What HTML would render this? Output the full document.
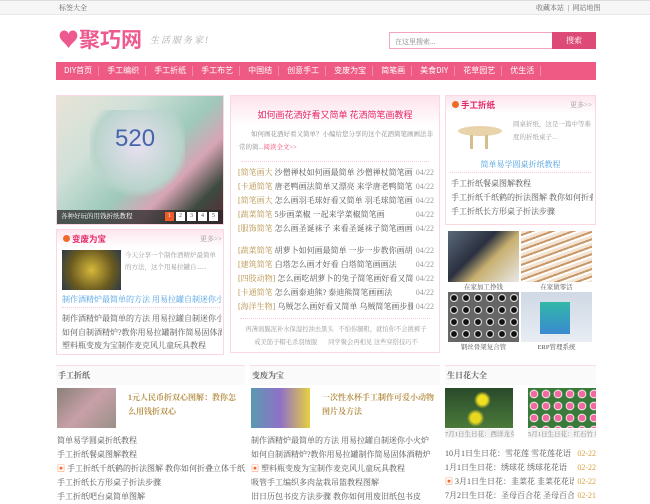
<!DOCTYPE html>
<html><head><meta charset="utf-8"><style>
*{margin:0;padding:0;box-sizing:border-box}
body{width:650px;height:500px;overflow:hidden;background:#fff;font-family:"Liberation Serif","Noto Serif CJK SC",serif;font-size:8px;color:#555;position:relative}
.a{position:absolute}
.top{left:0;top:0;width:650px;height:15px;background:#f6f6f6;border-bottom:1px solid #e8e8e8;border-top:1px solid #ddd}
.nav{left:56px;top:62px;width:540px;height:18px;background:#ee5a83;color:#fff;font-size:8px;font-family:"Noto Sans CJK SC",sans-serif;line-height:18px;white-space:nowrap}
.nav span{display:inline-block;padding:0 6px 0 8px;border-right:1px solid #f48ba8;line-height:10px}
.box{border:1px solid #fcd6e1;background:#fff}
.hd{background:linear-gradient(#fde6ee,#fff);height:18px}
.ttl{color:#e6296a;font-weight:bold;font-size:8.5px;font-family:"Noto Sans CJK SC",sans-serif}
.more{color:#999;font-size:7px}
.dot{width:7px;height:7px;border-radius:50%;background:#f06a2a;display:inline-block}
.l{white-space:nowrap;overflow:hidden;font-size:8px;color:#555}
.r{display:flex;white-space:nowrap;font-size:8px;color:#555;height:14px}
.r .t{flex:1;overflow:hidden}
.r .d{flex:none;margin-left:3px;color:#999}
.sec{border-top:1px solid #fbdbe5;background:#fafafa;height:20px;line-height:20px;padding-left:2px;font-weight:bold;color:#666;font-size:8px}
</style></head><body>
<div class="a top"></div>
<div class="a" style="left:59px;top:3px;font-size:7px;color:#666">标签大全</div>
<div class="a" style="left:536px;top:3px;font-size:7px;color:#666">收藏本站 &nbsp;|&nbsp; 网站地图</div>
<div class="a" style="left:58px;top:26px;color:#ee5a8f;font-size:21px;font-weight:bold;font-family:'Noto Sans CJK SC',sans-serif;line-height:26px">♥聚巧网</div>
<div class="a" style="left:150px;top:33px;color:#aaa;font-size:9px;letter-spacing:2px;font-style:italic">生活服务家!</div>
<div class="a" style="left:389px;top:32px;width:164px;height:17px;border:1px solid #f4a5be;font-size:7px;color:#888;padding:4px 5px">在这里搜索...</div>
<div class="a" style="left:552px;top:32px;width:44px;height:17px;background:#dd4a77;color:#fff;font-size:8px;text-align:center;line-height:17px">搜索</div>
<div class="a nav"><span>DIY首页</span><span>手工编织</span><span>手工折纸</span><span>手工布艺</span><span>中国结</span><span>创意手工</span><span>变废为宝</span><span>简笔画</span><span>美食DIY</span><span>花草园艺</span><span>优生活</span></div>

<div class="a" style="left:56px;top:95px;width:168px;height:130px;border:1px solid #fcd6e1;background:linear-gradient(135deg,#e9e4d8 0%,#cfe0d8 30%,#9ec9bb 55%,#d7a4b5 70%,#3d4a3f 85%,#5a2a38 100%)"></div>
<div class="a" style="left:90px;top:110px;width:95px;height:90px;background:radial-gradient(circle at 50% 40%,#e8e0f0,#b9d4cc 60%,transparent 72%)"></div>
<div class="a" style="left:115px;top:125px;font-size:24px;color:#4466aa;font-family:'Liberation Sans',sans-serif">520</div>
<div class="a" style="left:57px;top:210px;width:166px;height:14px;background:rgba(40,40,40,.75);color:#fff;font-size:6.5px;line-height:14px;padding-left:4px">各种好玩的用钱折纸教程</div>
<div class="a" style="left:165px;top:212px;font-size:6px;line-height:9px;white-space:nowrap"><span style="display:inline-block;width:9px;background:#f05a28;color:#fff;text-align:center;margin-right:2px">1</span><span style="display:inline-block;width:9px;background:#fff;text-align:center;margin-right:2px">2</span><span style="display:inline-block;width:9px;background:#fff;text-align:center;margin-right:2px">3</span><span style="display:inline-block;width:9px;background:#fff;text-align:center;margin-right:2px">4</span><span style="display:inline-block;width:9px;background:#fff;text-align:center">5</span></div>

<div class="a box" style="left:56px;top:229px;width:168px;height:126px"><div class="hd"></div></div>
<div class="a" style="left:63px;top:233px"><span class="dot"></span> <span class="ttl">变废为宝</span></div>
<div class="a more" style="left:200px;top:234px">更多>></div>
<div class="a" style="left:62px;top:250px;width:59px;height:40px;background:radial-gradient(circle at 50% 50%,#d6b83a,#6a5a20 60%,#2a3a4a)"></div>
<div class="a" style="left:125px;top:250px;width:95px;font-size:6.5px;color:#999;line-height:12px">今天分享一个制作酒精炉最简单的方法，这个用易拉罐自......</div>
<div class="a l" style="left:62px;top:294px;width:160px;color:#4a9ee0">制作酒精炉最简单的方法 用易拉罐自制迷你小火炉</div>
<div class="a" style="left:62px;top:307px;width:158px;border-top:1px dotted #fbc8d8"></div>
<div class="a" style="left:62px;top:312px;width:160px;line-height:13.5px">
<div class="l">制作酒精炉最简单的方法 用易拉罐自制迷你小火炉</div>
<div class="l">如何自制酒精炉?教你用易拉罐制作简易固体酒精</div>
<div class="l">塑料瓶变废为宝制作麦克风儿童玩具教程</div></div>

<div class="a box" style="left:230px;top:95px;width:210px;height:258px;background:linear-gradient(#fde3ec,#fff 30px,#fff)"></div>
<div class="a ttl" style="left:230px;top:108px;width:210px;text-align:center;font-size:9px;font-weight:normal;color:#e6296a">如何画花洒好看又简单 花洒简笔画教程</div>
<div class="a" style="left:239px;top:128px;width:194px;font-size:6.5px;color:#888;line-height:13px;text-indent:12px">如何画花洒好看又简单？小编给您分享的这个花洒简笔画画法非常的简...<span style="color:#f0446e">阅读全文>></span></div>
<div class="a" style="left:241px;top:161px;width:188px;border-top:1px dotted #fbc8d8"></div>
<div class="a" style="left:238px;top:166px;width:196px;line-height:14px;font-size:8px">
<div class="r"><span class="t"><span style="color:#b8914a">[简笔画大</span> 沙僧禅杖如何画最简单 沙僧禅杖简笔画教程</span><span class="d">04/22</span></div>
<div class="r"><span class="t"><span style="color:#b8914a">[卡通简笔</span> 唐老鸭画法简单又漂亮 来学唐老鸭简笔画</span><span class="d">04/22</span></div>
<div class="r"><span class="t"><span style="color:#b8914a">[简笔画大</span> 怎么画羽毛球好看又简单 羽毛球简笔画画法</span><span class="d">04/22</span></div>
<div class="r"><span class="t"><span style="color:#b8914a">[蔬菜简笔</span> 5步画菜椒 一起来学菜椒简笔画</span><span class="d">04/22</span></div>
<div class="r"><span class="t"><span style="color:#b8914a">[服饰简笔</span> 怎么画圣诞袜子 来看圣诞袜子简笔画画法</span><span class="d">04/22</span></div>
<div style="height:8px"></div>
<div class="r"><span class="t"><span style="color:#b8914a">[蔬菜简笔</span> 胡萝卜如何画最简单 一步一步教你画胡萝卜</span><span class="d">04/22</span></div>
<div class="r"><span class="t"><span style="color:#b8914a">[建筑简笔</span> 白塔怎么画才好看 白塔简笔画画法</span><span class="d">04/22</span></div>
<div class="r"><span class="t"><span style="color:#b8914a">[四肢动物]</span> 怎么画吃胡萝卜的兔子简笔画好看又简单</span><span class="d">04/22</span></div>
<div class="r"><span class="t"><span style="color:#b8914a">[卡通简笔</span> 怎么画泰迪熊? 泰迪熊简笔画画法</span><span class="d">04/22</span></div>
<div class="r"><span class="t"><span style="color:#b8914a">[海洋生物]</span> 乌贼怎么画好看又简单 乌贼简笔画步骤</span><span class="d">04/22</span></div></div>
<div class="a" style="left:240px;top:318px;width:190px;border-top:1px dotted #fbc8d8"></div>
<div class="a" style="left:240px;top:323px;width:192px;font-size:6.3px;color:#999;line-height:13px;text-align:center;white-space:nowrap">再薄面膜泥补水保湿控油去黑头 &nbsp; 不怕你腿粗，就怕你不会挑裤子<br>戒美筋子帽毛杀羽绒服 &nbsp; &nbsp; &nbsp; 同学聚会再相见 这些穿搭技巧不</div>

<div class="a box" style="left:445px;top:95px;width:151px;height:130px"><div class="hd"></div></div>
<div class="a" style="left:452px;top:99px"><span class="dot"></span> <span class="ttl">手工折纸</span></div>
<div class="a more" style="left:570px;top:100px">更多>></div>
<div class="a" style="left:458px;top:126px;width:44px;height:10px;border-radius:50%;background:#e8d3ab"></div>
<div class="a" style="left:470px;top:135px;width:18px;height:14px;border-left:3px solid #d7bd8e;border-right:3px solid #d7bd8e"></div>
<div class="a" style="left:513px;top:118px;width:80px;font-size:6.5px;color:#999;line-height:13px">圆桌折纸，这是一篇中等难度的折纸桌子...</div>
<div class="a l" style="left:445px;top:159px;width:151px;text-align:center;color:#4a9ee0">简单易学圆桌折纸教程</div>
<div class="a" style="left:450px;top:172px;width:141px;border-top:1px dotted #fbc8d8"></div>
<div class="a" style="left:451px;top:177px;width:142px;line-height:14px">
<div class="l">手工折纸餐桌图解教程</div><div class="l">手工折纸千纸鹤的折法图解 教你如何折叠立</div><div class="l">手工折纸长方形桌子折法步骤</div></div>
<div class="a" style="left:448px;top:231px;width:71px;height:51px;background:linear-gradient(135deg,#5a6a7a,#2a3040 40%,#c8b070 60%,#e8e8e8)"></div>
<div class="a" style="left:521px;top:231px;width:71px;height:51px;background:repeating-linear-gradient(160deg,#f4e4d4 0 3px,#c89868 3px 5px,#fff 5px 7px)"></div>
<div class="a" style="left:448px;top:282px;width:71px;font-size:6.5px;text-align:center">在家加工挣钱</div>
<div class="a" style="left:521px;top:282px;width:71px;font-size:6.5px;text-align:center">在家做零活</div>
<div class="a" style="left:448px;top:292px;width:71px;height:50px;background:radial-gradient(circle,#111 30%,#aaa 35%,#eee 45%,#666 50%) 0 0/12px 12px"></div>
<div class="a" style="left:521px;top:292px;width:71px;height:50px;background:linear-gradient(#cfd8e4,#e8edf4)"></div>
<div class="a" style="left:540px;top:302px;width:30px;height:32px;background:linear-gradient(#32b8a8,#3a8ad0)"></div>
<div class="a" style="left:448px;top:342px;width:71px;font-size:6.5px;text-align:center">钢丝骨架复合管</div>
<div class="a" style="left:521px;top:342px;width:71px;font-size:6.5px;text-align:center">ERP管理系统</div>

<div class="a sec" style="left:56px;top:365px;width:189px">手工折纸</div>
<div class="a sec" style="left:250px;top:365px;width:190px">变废为宝</div>
<div class="a sec" style="left:445px;top:365px;width:151px">生日花大全</div>
<div class="a" style="left:57px;top:388px;width:59px;height:40px;background:linear-gradient(135deg,#8a8078,#c8a0a8 50%,#9a9088)"></div>
<div class="a" style="left:128px;top:391px;width:112px;color:#b8914a;font-weight:bold;font-size:8px;line-height:14px">1元人民币折双心图解：教你怎么用钱折双心</div>
<div class="a" style="left:251px;top:388px;width:59px;height:40px;background:linear-gradient(90deg,#5a9ab0,#9070c8 50%,#e8d040)"></div>
<div class="a" style="left:322px;top:391px;width:115px;color:#b8914a;font-weight:bold;font-size:8px;line-height:14px">一次性水杯手工制作可爱小动物图片及方法</div>
<div class="a" style="left:57px;top:434px;width:188px;line-height:14px">
<div class="l">简单易学圆桌折纸教程</div><div class="l">手工折纸餐桌图解教程</div><div class="l"><span style="color:#f06a2a">▣</span> 手工折纸千纸鹤的折法图解 教你如何折叠立体千纸鹤</div><div class="l">手工折纸长方形桌子折法步骤</div><div class="l">手工折纸吧台桌简单图解</div></div>
<div class="a" style="left:251px;top:434px;width:189px;line-height:14px">
<div class="l">制作酒精炉最简单的方法 用易拉罐自制迷你小火炉</div><div class="l">如何自制酒精炉?教你用易拉罐制作简易固体酒精炉</div><div class="l"><span style="color:#f06a2a">▣</span> 塑料瓶变废为宝制作麦克风儿童玩具教程</div><div class="l">吸管手工编织多肉盆栽吊篮教程图解</div><div class="l">旧日历包书皮方法步骤 教你如何用废旧纸包书皮</div></div>
<div class="a" style="left:445px;top:388px;width:68px;height:40px;background:radial-gradient(circle at 55% 30%,#f0e020 10%,transparent 18%),radial-gradient(circle at 45% 75%,#e8d820 10%,transparent 18%),linear-gradient(#2a4a2a,#4a7a3a)"></div>
<div class="a" style="left:528px;top:388px;width:68px;height:40px;background:radial-gradient(circle,#f06aa0 35%,#fff 45%,#3a7a3a 55%) 0 0/12px 12px"></div>
<div class="a l" style="left:445px;top:429px;width:69px;font-size:6.5px;color:#888;background:#f2f2f2">7月1日生日花：西洋龙芽</div>
<div class="a l" style="left:528px;top:429px;width:68px;font-size:6.5px;color:#888;background:#f2f2f2">5月1日生日花：红石竹 红</div>
<div class="a" style="left:445px;top:447px;width:151px;line-height:14px">
<div class="r"><span class="t">10月1日生日花：雪花莲 雪花莲花语</span><span class="d" style="color:#d8a040">02-22</span></div>
<div class="r"><span class="t">1月1日生日花：绣球花 绣球花花语</span><span class="d" style="color:#d8a040">02-22</span></div>
<div class="r"><span class="t"><span style="color:#f06a2a">▣</span> 3月1日生日花：韭菜花 韭菜花花语</span><span class="d" style="color:#d8a040">02-22</span></div>
<div class="r"><span class="t">7月2日生日花：圣母百合花 圣母百合花花</span><span class="d" style="color:#d8a040">02-21</span></div></div>
</body></html>
